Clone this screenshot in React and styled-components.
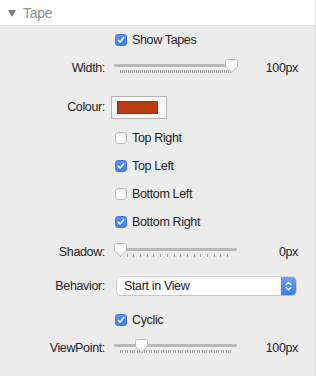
import React from 'react';
import styled, { createGlobalStyle } from 'styled-components';

const GlobalStyle = createGlobalStyle`
  html, body {
    margin: 0;
    padding: 0;
    background: #ececec;
  }
  body {
    font-family: "Liberation Sans", Arial, sans-serif;
    font-size: 12.5px;
    color: #222;
  }
`;

const Panel = styled.div`
  width: 316px;
  height: 376px;
  box-sizing: border-box;
  background: #ececec;
  border-right: 1px solid #dcdcdc;
  overflow: hidden;
`;

const Header = styled.div`
  height: 25px;
  background: #fff;
  border-bottom: 1px solid #dedede;
  display: flex;
  align-items: center;
  padding-left: 8px;
  gap: 7px;
  color: #8c8c8c;
  font-size: 14px;
  letter-spacing: -0.3px;

  svg {
    margin-top: 1px;
  }
`;

const Row = styled.div`
  display: flex;
  align-items: center;
  height: 28px;
  margin-top: ${(p) => p.$gap || 0}px;
`;

const Label = styled.div`
  width: 105px;
  text-align: right;
  flex-shrink: 0;
  margin-right: ${(p) => p.$space || 9}px;
  letter-spacing: -0.35px;
`;

const CheckLabel = styled.label`
  display: flex;
  align-items: center;
  gap: 5px;
  margin-left: 115px;
  letter-spacing: -0.35px;
`;

const Box = styled.span`
  width: 12px;
  height: 12px;
  box-sizing: border-box;
  border-radius: 3px;
  display: flex;
  align-items: center;
  justify-content: center;
  background: ${(p) => (p.$on ? 'linear-gradient(#5b93f7, #3d7ef2)' : '#fff')};
  border: 1px solid ${(p) => (p.$on ? '#3c78e0' : '#b8b8b8')};
  box-shadow: ${(p) => (p.$on ? 'none' : 'inset 0 1px 0 #f4f4f4')};
`;

const SliderBox = styled.div`
  position: relative;
  width: 123px;
  height: 20px;
  flex-shrink: 0;
`;

const Track = styled.div`
  position: absolute;
  left: 0;
  right: 0;
  top: 6px;
  height: 3px;
  border-radius: 2px;
  background: #b9b9b9;
`;

const Ticks = styled.div`
  position: absolute;
  left: 6px;
  right: 5px;
  top: 12px;
  height: 3px;
  background: repeating-linear-gradient(
    to right,
    #9a9a9a 0,
    #9a9a9a 1px,
    transparent 1px,
    transparent ${(p) => p.$step}px
  );
`;

const Thumb = styled.svg`
  position: absolute;
  top: 1px;
  margin-left: -6px;
`;

const Value = styled.div`
  flex: 1;
  text-align: right;
  padding-right: 17px;
  letter-spacing: -0.35px;
`;

const ColourWell = styled.div`
  width: 56px;
  height: 23px;
  box-sizing: border-box;
  border: 1px solid #b4b4b4;
  background: #f8f8f8;
  display: flex;
  align-items: center;
  justify-content: center;
  margin-left: -3px;
  padding-right: 4px;
`;

const Swatch = styled.div`
  width: 41px;
  height: 13px;
  box-sizing: border-box;
  background: ${(p) => p.$color};
  border: 1px solid #8e3512;
`;

const Popup = styled.div`
  width: 179px;
  height: 18px;
  box-sizing: border-box;
  margin-left: 2px;
  background: #fff;
  border-radius: 4px;
  box-shadow: 0 0 0 0.5px #b9b9b9, 0 1px 1px rgba(0, 0, 0, 0.12);
  display: flex;
  align-items: center;
  justify-content: space-between;
  padding-left: 7px;
  letter-spacing: -0.35px;
`;

const Stepper = styled.div`
  width: 15px;
  height: 18px;
  border-radius: 0 4px 4px 0;
  background: linear-gradient(#6aa2fa, #3a7cf0);
  display: flex;
  align-items: center;
  justify-content: center;
`;

const Check = () => (
  <svg width="8" height="8" viewBox="0 0 8 8">
    <path d="M1.3 4.3 L3.1 6.1 L6.7 1.6" fill="none" stroke="#fff" strokeWidth="1.5" strokeLinecap="round" strokeLinejoin="round" />
  </svg>
);

const Checkbox = ({ on, children, gap }) => (
  <Row $gap={gap}>
    <CheckLabel>
      <Box $on={on}>{on && <Check />}</Box>
      {children}
    </CheckLabel>
  </Row>
);

const Slider = ({ label, value, pos, step, gap }) => (
  <Row $gap={gap}>
    <Label>{label}</Label>
    <SliderBox>
      <Track />
      <Ticks $step={step} />
      <Thumb width="13" height="14" viewBox="0 0 13 14" style={{ left: `${pos}px` }}>
        <path
          d="M2.5 0.5 H10.5 Q12.5 0.5 12.5 2.5 V7.5 L6.5 13 L0.5 7.5 V2.5 Q0.5 0.5 2.5 0.5 Z"
          fill="#fff"
          stroke="#a8a8a8"
          strokeWidth="0.8"
        />
      </Thumb>
    </SliderBox>
    <Value>{value}</Value>
  </Row>
);

export default function App() {
  return (
    <Panel>
      <GlobalStyle />
      <Header>
        <svg width="8" height="7" viewBox="0 0 8 7">
          <path d="M0 0 H8 L4 7 Z" fill="#7a7a7a" />
        </svg>
        Tape
      </Header>
      <Checkbox on>Show Tapes</Checkbox>
      <Slider label="Width:" value="100px" pos={117} step={2} />
      <Row $gap={11}>
        <Label>Colour:</Label>
        <ColourWell>
          <Swatch $color="#b93c12" />
        </ColourWell>
      </Row>
      <Checkbox gap={3}>Top Right</Checkbox>
      <Checkbox on>Top Left</Checkbox>
      <Checkbox>Bottom Left</Checkbox>
      <Checkbox on>Bottom Right</Checkbox>
      <Slider label="Shadow:" value="0px" pos={6} step={6.7} gap={2} />
      <Row $gap={6}>
        <Label $space={10}>Behavior:</Label>
        <Popup>
          Start in View
          <Stepper>
            <svg width="7" height="10" viewBox="0 0 7 10">
              <path d="M1 3.6 L3.5 1.2 L6 3.6 M1 6.4 L3.5 8.8 L6 6.4" fill="none" stroke="#fff" strokeWidth="1.2" strokeLinecap="round" strokeLinejoin="round" />
            </svg>
          </Stepper>
        </Popup>
      </Row>
      <Checkbox on gap={6}>Cyclic</Checkbox>
      <Slider label="ViewPoint:" value="100px" pos={27} step={2.4} />
    </Panel>
  );
}
